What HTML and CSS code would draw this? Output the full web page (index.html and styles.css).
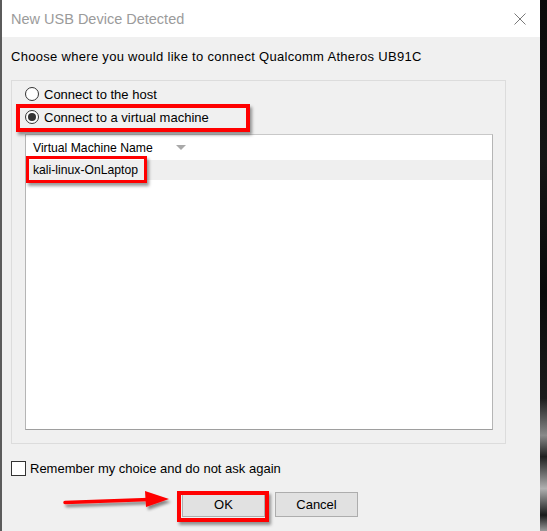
FILE: index.html
```html
<!DOCTYPE html>
<html>
<head>
<meta charset="utf-8">
<title>New USB Device Detected</title>
<link rel="stylesheet" href="styles.css">
</head>
<body>
<div class="edge-left"></div>
<div class="dialog">
  <div class="titlebar">
    <span class="title">New USB Device Detected</span>
    <svg class="close" width="12" height="12" viewBox="0 0 12 12"><path d="M0.5 0.5 L11.5 11.5 M11.5 0.5 L0.5 11.5" stroke="#7a7a7a" stroke-width="1" fill="none"/></svg>
  </div>
  <div class="content">
    <p class="prompt">Choose where you would like to connect Qualcomm Atheros UB91C</p>
    <div class="group">
      <label class="radio-row"><span class="radio"></span><span>Connect to the host</span></label>
      <label class="radio-row"><span class="radio checked"></span><span>Connect to a virtual machine</span></label>
      <div class="listview">
        <div class="lv-header">
          <span class="lv-col">Virtual Machine Name</span>
          <svg class="sort" width="10" height="5" viewBox="0 0 10 5"><polygon points="0,0 10,0 5,5" fill="#a9a9a9"/></svg>
        </div>
        <div class="lv-row">kali-linux-OnLaptop</div>
      </div>
    </div>
    <label class="check-row"><span class="checkbox"></span><span>Remember my choice and do not ask again</span></label>
    <div class="buttons">
      <button class="btn">OK</button>
      <button class="btn">Cancel</button>
    </div>
  </div>
</div>
<div class="edge-right"></div>

<div class="mark mark-radio"></div>
<div class="mark mark-row"></div>
<div class="mark mark-ok"></div>
<svg class="arrow" width="547" height="531" viewBox="0 0 547 531">
  <defs>
    <filter id="sh" x="-20%" y="-50%" width="140%" height="200%">
      <feGaussianBlur in="SourceAlpha" stdDeviation="1.5"/>
      <feOffset dx="2" dy="3" result="b"/>
      <feComponentTransfer><feFuncA type="linear" slope="0.45"/></feComponentTransfer>
      <feMerge><feMergeNode/><feMergeNode in="SourceGraphic"/></feMerge>
    </filter>
  </defs>
  <g filter="url(#sh)">
    <path d="M65 502.5 L149 499.5" stroke="#ff0000" stroke-width="3.5" stroke-linecap="round" fill="none"/>
    <polygon points="145,491 169,499 146,507" fill="#ff0000"/>
  </g>
</svg>
</body>
</html>
```
FILE: styles.css
```css
html, body {
  margin: 0;
  padding: 0;
}
body {
  width: 547px;
  height: 531px;
  overflow: hidden;
  position: relative;
  display: flex;
  background: #0c0c0c;
  font-family: "Liberation Sans", Tahoma, sans-serif;
  font-size: 13px;
  color: #000;
}
.edge-left {
  width: 2px;
  background: #5b5b5b;
}
.edge-right {
  width: 7px;
  background: linear-gradient(to bottom, #0a0a0a 0%, #151515 30%, #0a0a0a 55%, #1c1c1c 75%, #8a8a8a 82%, #202020 86%, #b0b0b0 92%, #1a1a1a 97%, #9a9a9a 100%);
}
.dialog {
  width: 538px;
  display: flex;
  flex-direction: column;
  background: #f0f0f0;
}
.titlebar {
  height: 37px;
  background: #fff;
  display: flex;
  align-items: center;
  justify-content: space-between;
  padding: 0 14px 0 9px;
  box-sizing: border-box;
}
.title {
  font-size: 14.5px;
  color: #9b9b9b;
}
.close {
  display: block;
  margin-top: 1px;
}
.content {
  padding: 0 34px 0 9px;
}
.prompt {
  margin: 12px 0 15px;
  line-height: 16px;
  font-size: 13px;
  letter-spacing: 0.3px;
}
.group {
  border: 1px solid #dcdcdc;
  height: 364px;
  box-sizing: border-box;
  padding: 3px 12px 13px 13px;
  display: flex;
  flex-direction: column;
}
.radio-row, .check-row {
  display: flex;
  align-items: center;
  height: 20px;
  gap: 5px;
}
.radio-row + .radio-row {
  margin-top: 3px;
}
.radio {
  width: 14px;
  height: 14px;
  box-sizing: border-box;
  border: 1px solid #333;
  border-radius: 50%;
  background: #fff;
  display: flex;
  align-items: center;
  justify-content: center;
}
.radio.checked::after {
  content: "";
  width: 8px;
  height: 8px;
  border-radius: 50%;
  background: #333;
}
.listview {
  margin-top: 7px;
  flex: 1;
  border: 1px solid #9e9e9e;
  border-top-color: #c8c8c8;
  border-left-color: #b5b5b5;
  border-right-color: #b5b5b5;
  background: #fff;
  font-size: 12.2px;
}
.lv-header {
  height: 25px;
  display: flex;
  align-items: center;
  padding-left: 7px;
}
.sort {
  margin-left: 23px;
  margin-top: -1px;
}
.lv-row {
  height: 20px;
  line-height: 20px;
  padding-left: 7px;
  background: #efefef;
}
.check-row {
  margin-top: 16px;
  height: 16px;
  gap: 4px;
}
.checkbox {
  width: 15px;
  height: 15px;
  box-sizing: border-box;
  border: 1px solid #333;
  background: #fff;
}
.buttons {
  display: flex;
  gap: 10px;
  margin: 16px 0 0 171px;
}
.btn {
  width: 83px;
  height: 25px;
  box-sizing: border-box;
  border: 1px solid #adadad;
  background: #e1e1e1;
  font-family: "Liberation Sans", Tahoma, sans-serif;
  font-size: 13px;
  color: #000;
  padding: 0;
}
.mark {
  position: absolute;
  border: 4px solid #ff0000;
  box-sizing: border-box;
  box-shadow: 2px 3px 3px rgba(0, 0, 0, 0.4);
}
.mark-radio {
  left: 16px;
  top: 104px;
  width: 234px;
  height: 28px;
}
.mark-row {
  left: 26px;
  top: 156px;
  width: 121px;
  height: 27px;
  border-width: 3px;
}
.mark-ok {
  left: 177px;
  top: 491px;
  width: 92px;
  height: 31px;
}
.arrow {
  position: absolute;
  left: 0;
  top: 0;
  pointer-events: none;
}
```
